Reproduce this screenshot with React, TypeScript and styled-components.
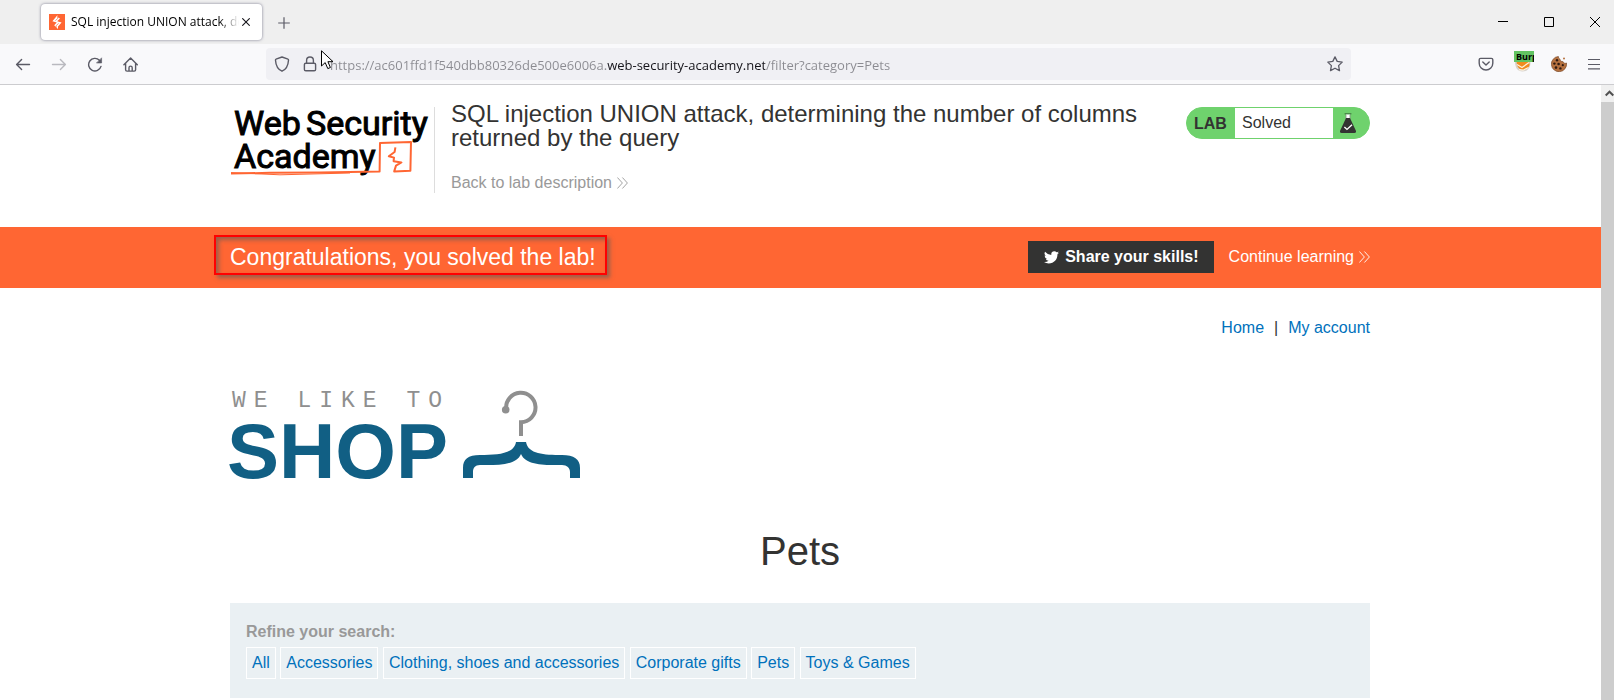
import React from "react";
import styled, { createGlobalStyle } from "styled-components";

const sans = `"Liberation Sans", Arial, sans-serif`;
const uiFont = `"Open Sans", "Noto Sans", sans-serif`;
const orange = "#ff6633";
const link = "#0071bc";
const ink = "#333332";

const GlobalStyle = createGlobalStyle`
  *, *::before, *::after { box-sizing: border-box; }
  body { margin: 0; background: #fff; font-family: ${sans}; font-size: 16px; line-height: 20px; color: ${ink}; }
  button, input { font: inherit; color: inherit; }
  h1, h2, p { margin: 0; font-weight: 400; }
  svg { display: block; flex: none; }
`;

const Browser = styled.div`
  min-height: 100vh;
  display: flex;
  flex-direction: column;
  position: relative;
  overflow: hidden;
`;

const TabBar = styled.div`
  display: flex;
  height: 44px;
  background: #efefef;
  padding-left: 41px;
`;

const Tab = styled.div`
  display: flex;
  align-items: center;
  width: 221px;
  height: 36px;
  margin-top: 4px;
  padding: 0 9px 0 8px;
  background: #fff;
  border-radius: 4px;
  box-shadow: 0 0 3px rgba(70, 70, 100, 0.7);
`;

const TabLabel = styled.span`
  flex: 1;
  min-width: 0;
  margin-left: 6px;
  overflow: hidden;
  white-space: nowrap;
  font: 12px/20px ${uiFont};
  color: #000;
  mask-image: linear-gradient(to right, #000 calc(100% - 20px), transparent);
`;

const IconButton = styled.button<{ $width?: number }>`
  display: flex;
  align-items: center;
  justify-content: center;
  flex: none;
  width: ${(p) => p.$width ?? 36}px;
  height: 32px;
  padding: 0;
  border: 0;
  background: none;
  color: #5b5b66;
`;

const NewTab = styled(IconButton)`
  margin: 7px 0 0 4px;
`;

const WindowButtons = styled.div`
  display: flex;
  align-items: center;
  margin-left: auto;
  margin-right: -4px;
  button { color: #000; }
`;

const Toolbar = styled.div`
  display: flex;
  align-items: center;
  height: 41px;
  padding-left: 5px;
  background: #f9f9fb;
  border-bottom: 1px solid #cccccf;
`;

const AddressBar = styled.label`
  flex: 1;
  min-width: 0;
  display: flex;
  align-items: center;
  height: 32px;
  margin: 0 117px;
  padding: 0 8px;
  gap: 12px;
  background: #f0f0f4;
  border-radius: 4px;
  color: #5b5b66;
`;

const Address = styled.input`
  flex: 1;
  min-width: 0;
  height: 24px;
  padding: 2px 0 0;
  border: 0;
  outline: 0;
  font: 13px/22px ${uiFont};
  color: #8b8b91;
  background: linear-gradient(to right, #8b8b91 277px, #15141a 277px, #15141a 435px, #8b8b91 435px);
  background-clip: text;
  -webkit-background-clip: text;
  -webkit-text-fill-color: transparent;
`;

const Pointer = styled.svg`
  position: absolute;
  left: 321px;
  top: 50px;
`;

const Viewport = styled.div`
  flex: 1;
  display: flex;
`;

const Page = styled.div`
  flex: 1;
  min-width: 0;
  padding: 0 1px 2px 0;
`;

const Scrollbar = styled.div`
  flex: none;
  width: 13px;
  background: #cdcdcd;
  overflow: hidden;
`;

const ScrollUp = styled(IconButton)`
  width: 17px;
  height: 17px;
  background: #f0f0f0;
`;

const Container = styled.div`
  max-width: 1140px;
  margin: 0 auto;
`;

const Header = styled(Container)`
  display: flex;
  align-items: flex-start;
  height: 142px;
  padding-top: 17px;
`;

const LogoLink = styled.a`
  width: 205px;
  height: 86px;
  margin-top: 5px;
  border-right: 1px solid #dddddd;
  svg { overflow: visible; }
`;

const AcademyText = styled.text`
  font-family: Roboto, sans-serif;
  font-size: 34px;
  fill: #000;
  stroke: #000;
  stroke-width: 1px;
`;

const Titles = styled.div`
  flex: 1;
  padding: 0 0 0 16px;
`;

const Title = styled.h1`
  font-size: 24px;
  line-height: 24px;
`;

const ArrowLink = styled.a<{ $color: string }>`
  display: inline-flex;
  align-items: center;
  gap: 5px;
  color: ${(p) => p.$color};
  text-decoration: none;
  white-space: nowrap;
`;

const BackLink = styled(ArrowLink)`
  margin-top: 23px;
`;

const LabStatus = styled.div`
  display: flex;
  width: 184px;
  height: 32px;
  margin-top: 5px;
  line-height: 30px;
  border: 1px solid #6fd26d;
  border-radius: 16px;
  background: #6fd26d;
  overflow: hidden;
  strong { width: 48px; padding-left: 7px; line-height: 32px; }
  span { width: 98px; padding-left: 7px; background: #fff; }
  svg { margin: 5px 0 0 7px; }
`;

const Banner = styled.section`
  margin-right: -1px;
  padding-right: 1px;
  background: ${orange};
  color: #fff;
`;

const BannerRow = styled(Container)`
  display: flex;
  align-items: center;
  height: 61px;
  padding-bottom: 1px;
`;

const Congrats = styled.p`
  position: relative;
  font-size: 23px;
  line-height: 32px;
  &::after {
    content: "";
    position: absolute;
    inset: -6px -11px -2px -16px;
    border: 2px solid #f00;
    box-shadow: 3px 3px 4px rgba(90, 90, 90, 0.6), inset 3px 3px 4px rgba(90, 90, 90, 0.6);
  }
`;

const ShareButton = styled.button`
  display: flex;
  align-items: center;
  gap: 6px;
  height: 32px;
  margin: 0 15px 0 auto;
  padding: 0 15px 0 16px;
  border: 0;
  background: ${ink};
  color: #fff;
  font-weight: 700;
`;

const AccountNav = styled(Container).attrs({ as: "nav" })`
  display: flex;
  justify-content: flex-end;
  gap: 10px;
  padding-top: 30px;
  a { color: ${link}; text-decoration: none; }
`;

const ShopLogo = styled(Container)`
  display: flex;
  height: 88px;
  margin-top: 53px;
  svg { overflow: visible; }
`;

const Tagline = styled.text`
  font-family: "Liberation Mono", monospace;
  font-size: 23px;
  letter-spacing: 8px;
  fill: #8f8f8f;
`;

const ShopText = styled.text`
  font-family: ${sans};
  font-size: 78px;
  font-weight: 700;
  fill: #115f84;
`;

const PageTitle = styled.h2`
  margin-top: 48px;
  font-size: 40px;
  line-height: 48px;
  text-align: center;
`;

const Filters = styled(Container).attrs({ as: "section" })`
  margin-top: 28px;
  padding: 19px 16px;
  background: #eaf0f3;
`;

const FilterLabel = styled.p`
  color: #999;
  font-weight: 700;
  line-height: 20px;
`;

const FilterList = styled.div`
  margin-top: 5px;
`;

const FilterLink = styled.a`
  display: inline-block;
  vertical-align: top;
  padding: 5px;
  border: 1px solid #fff;
  color: ${link};
  text-decoration: none;
`;

const line = { fill: "none", stroke: "currentColor", strokeWidth: 1.4, strokeLinecap: "round", strokeLinejoin: "round" } as const;

const DoubleChevron = () => (
  <svg width="11" height="12" viewBox="0 0 11 12" fill="none" stroke="currentColor" strokeWidth="0.9" aria-hidden="true">
    <path d="M0.4 0.5 5.4 6 0.4 11.5M5.4 0.5 10.4 6 5.4 11.5" />
  </svg>
);

const categories = ["All", "Accessories", "Clothing, shoes and accessories", "Corporate gifts", "Pets", "Toys & Games"];

export default function App() {
  return (
    <Browser>
      <GlobalStyle />
      <TabBar>
        <Tab>
          <svg width="16" height="16" viewBox="0 0 16 16">
            <rect width="16" height="16" fill={orange} />
            <path d="M8.6 1 3.4 7.2 7.8 8.6 5.2 11.2 9 15 9 12.6 12.6 8.6 8.2 7.2 11 4.6 8.6 3.2Z" fill="#fff" />
            <path d="M9.2 0 8.6 4.6 6.4 6.6M6.6 16 7.2 11.6 9.6 9.4" fill="none" stroke={orange} strokeWidth="0.7" />
          </svg>
          <TabLabel>SQL injection UNION attack, determining</TabLabel>
          <IconButton $width={14} aria-label="Close tab">
            <svg width="8" height="8" viewBox="0 0 8 8" stroke="#15141a" strokeWidth="1.1">
              <path d="M0.3 0.3 7.7 7.7M7.7 0.3 0.3 7.7" />
            </svg>
          </IconButton>
        </Tab>
        <NewTab aria-label="New tab">
          <svg width="12" height="12" viewBox="0 0 12 12" stroke="currentColor" strokeWidth="1.2">
            <path d="M6 0.2V11.8M0.2 6H11.8" />
          </svg>
        </NewTab>
        <WindowButtons>
          <IconButton $width={46} aria-label="Minimize">
            <svg width="10" height="10" viewBox="0 0 10 10"><path d="M0 4H10V5H0Z" /></svg>
          </IconButton>
          <IconButton $width={46} aria-label="Maximize">
            <svg width="10" height="10" viewBox="0 0 10 10" fill="none" stroke="#000"><path d="M0.5 0.5H9.5V9.5H0.5Z" /></svg>
          </IconButton>
          <IconButton $width={46} aria-label="Close">
            <svg width="10" height="10" viewBox="0 0 10 10" stroke="#000"><path d="M0 0 10 10M10 0 0 10" /></svg>
          </IconButton>
        </WindowButtons>
      </TabBar>

      <Toolbar>
        <IconButton aria-label="Back">
          <svg width="16" height="16" viewBox="0 0 16 16" {...line}><path d="M14.5 8.5H1.6M6.6 3.5 1.6 8.5 6.6 13.5" /></svg>
        </IconButton>
        <IconButton aria-label="Forward" disabled>
          <svg width="16" height="16" viewBox="0 0 16 16" {...line} opacity="0.4"><path d="M1.5 8.5H14.4M9.4 3.5 14.4 8.5 9.4 13.5" /></svg>
        </IconButton>
        <IconButton aria-label="Reload">
          <svg width="16" height="16" viewBox="0 0 16 16" {...line}>
            <path d="M14 10.4A6.3 6.3 0 1 1 12.4 4.2" />
            <path d="M14.6 2.2V7H9.8Z" fill="currentColor" strokeWidth="0.6" />
          </svg>
        </IconButton>
        <IconButton aria-label="Home">
          <svg width="16" height="16" viewBox="0 0 16 16" {...line}>
            <path d="M0.9 8.7 7.6 1.9 14.3 8.7M2.6 7.3V13.7Q2.6 15.1 4 15.1H11.2Q12.6 15.1 12.6 13.7V7.3M6 14.9V11.7Q6 10.1 7.6 10.1T9.2 11.7V14.9" />
          </svg>
        </IconButton>
        <AddressBar>
          <svg width="16" height="16" viewBox="0 0 16 16" {...line}>
            <path d="M8 1 14 3.2Q14.6 3.4 14.5 4.2C14.2 9.2 12 13.4 8 15.2 4 13.4 1.8 9.2 1.5 4.2Q1.4 3.4 2 3.2Z" />
          </svg>
          <svg width="16" height="16" viewBox="0 0 16 16" {...line}>
            <path d="M4.6 7.2V4.4a3.4 3.4 0 0 1 6.8 0V7.2M3.8 7.2H12.2Q13.6 7.2 13.6 8.6V13.4Q13.6 14.8 12.2 14.8H3.8Q2.4 14.8 2.4 13.4V8.6Q2.4 7.2 3.8 7.2Z" />
          </svg>
          <Address
            aria-label="Address"
            defaultValue="https://ac601ffd1f540dbb80326de500e6006a.web-security-academy.net/filter?category=Pets"
          />
          <svg width="16" height="16" viewBox="0 0 16 16" {...line} strokeWidth={1.3}>
            <path d="M8 0.9 10.2 5.4 15.2 6.1 11.6 9.6 12.5 14.6 8 12.2 3.5 14.6 4.4 9.6 0.8 6.1 5.8 5.4Z" />
          </svg>
        </AddressBar>
        <IconButton aria-label="Save to Pocket">
          <svg width="16" height="16" viewBox="0 0 16 16" {...line}>
            <path d="M2.6 2.4H13.4Q14.8 2.4 14.8 3.8V7.2A6.8 6.8 0 0 1 1.2 7.2V3.8Q1.2 2.4 2.6 2.4ZM4.8 6 8 9.1 11.2 6" />
          </svg>
        </IconButton>
        <IconButton $width={40} aria-label="Proxy: Burp">
          <svg width="20" height="26" viewBox="0 0 20 26">
            <path d="M1 11H16.5C16.5 17 13.6 20.5 8.5 20.5S1.4 17 1 11Z" fill="#d8d3cd" />
            <path d="M2.6 10H15L15.6 14C14 18 11.6 19.3 8.4 18.9 5 18.5 2.6 15.5 2.6 10Z" fill="#f08c1e" />
            <path d="M3 13.5 8 16.6 15 11.4M5 18.6 9 19.2 14.5 16.5" stroke="#fff3df" strokeWidth="1.2" fill="none" />
            <path d="M0 0H20V11H0Z" fill="#62c462" />
            <text x="2" y="9" fontFamily={uiFont} fontSize="9" fontWeight="700" fill="#000">Burp</text>
          </svg>
        </IconButton>
        <IconButton $width={30} aria-label="Cookies">
          <svg width="16" height="16" viewBox="0 0 16 16">
            <path d="M7.4 0.5A2.6 2.6 0 0 0 9 3.2 2.5 2.5 0 0 0 12 5.6 2.4 2.4 0 0 0 15.5 7 7.6 7.6 0 1 1 7.4 0.5Z" fill="#b5713f" stroke="#7b4a2b" strokeWidth="0.7" />
            <circle cx="13" cy="2.6" r="1" fill="#b5713f" />
            <g fill="#2f1a12">
              <circle cx="6" cy="4.2" r="1.2" /><circle cx="3.4" cy="7.6" r="1.2" /><circle cx="7.6" cy="8" r="1.3" />
              <circle cx="5" cy="11.6" r="1.3" /><circle cx="9.4" cy="12.4" r="1.2" /><circle cx="11.8" cy="9.2" r="1.1" />
            </g>
          </svg>
        </IconButton>
        <IconButton $width={40} aria-label="Menu">
          <svg width="12" height="12" viewBox="0 0 12 12" stroke="currentColor" strokeWidth="1.2">
            <path d="M0 1.5H12M0 6.5H12M0 10.8H12" />
          </svg>
        </IconButton>
      </Toolbar>

      <Viewport>
        <Page>
          <Header as="header">
            <LogoLink href="#home" aria-label="Web Security Academy">
              <svg width="200" height="70" viewBox="0 0 200 70">
                <AcademyText x="4" y="28">Web</AcademyText>
                <AcademyText x="76" y="28">Security</AcademyText>
                <AcademyText x="4" y="61">Academy</AcademyText>
                <path d="M1 66.6 40 65.8 90 65.4 149.6 64.6 150 36 181 35 180.4 63.8 164.2 64.4 166 58.6 171.4 55.4 163.6 54.2 164 50.6 158.8 49.2 164.6 45 165.4 40.4" fill="none" stroke={orange} strokeWidth="2" strokeLinejoin="round" />
                <path d="M1 65.6 50 67.8 120 66" fill="none" stroke={orange} strokeWidth="1" />
              </svg>
            </LogoLink>
            <Titles>
              <Title>SQL injection UNION attack, determining the number of columns returned by the query</Title>
              <BackLink href="#description" $color="#999">Back to lab description <DoubleChevron /></BackLink>
            </Titles>
            <LabStatus>
              <strong>LAB</strong>
              <span>Solved</span>
              <svg width="16" height="20" viewBox="0 0 16 20">
                <path d="M4.6 0H11.4V1.4H4.6Z" fill="#4a8a49" />
                <path d="M6 1.4H10V6H6Z" fill="#fff" />
                <path d="M5.6 1.4H6.4V6H5.6ZM9.6 1.4H10.4V6H9.6Z" fill="#8a8a8a" />
                <path d="M6 5H10L16 18Q16.4 20 14.4 20H1.6Q-0.4 20 0 18Z" fill={ink} />
                <path d="M4.4 14 7 16.4 12 11.8" fill="none" stroke="#fff" strokeWidth="1.4" />
              </svg>
            </LabStatus>
          </Header>

          <Banner>
            <BannerRow>
              <Congrats>Congratulations, you solved the lab!</Congrats>
              <ShareButton>
                <svg width="15" height="13" viewBox="0 0 24 20" fill="#fff">
                  <path d="M24 2.4a9.8 9.8 0 0 1-2.8.8A4.9 4.9 0 0 0 23.3.4a9.9 9.9 0 0 1-3.1 1.2 4.9 4.9 0 0 0-8.4 4.5A14 14 0 0 1 1.7.9a4.9 4.9 0 0 0 1.5 6.6 4.9 4.9 0 0 1-2.2-.6v.1a4.9 4.9 0 0 0 3.9 4.8 4.9 4.9 0 0 1-2.2.1 4.9 4.9 0 0 0 4.6 3.4A9.9 9.9 0 0 1 0 17.3a13.9 13.9 0 0 0 7.5 2.2c9.1 0 14.3-7.7 14-14.6A10 10 0 0 0 24 2.4Z" />
                </svg>
                Share your skills!
              </ShareButton>
              <ArrowLink href="#learning" $color="#fff">Continue learning <DoubleChevron /></ArrowLink>
            </BannerRow>
          </Banner>

          <AccountNav>
            <a href="#home">Home</a>
            <span>|</span>
            <a href="#account">My account</a>
          </AccountNav>

          <ShopLogo>
            <svg width="351" height="88" viewBox="0 0 351 88" role="img" aria-label="We like to shop">
              <Tagline x="2" y="16">WE LIKE TO</Tagline>
              <ShopText x="-3" y="87">SHOP</ShopText>
              <path d="M276.2 18A14.7 14.7 0 1 1 291 31.2V45" fill="none" stroke="#8f8f8f" strokeWidth="4" />
              <circle cx="275.7" cy="18.7" r="3.8" fill="#8f8f8f" />
              <path d="M233 87V77C233 68 238 64 250 64C268 64 284 63 286 51H296C298 63 314 64 332 64C344 64 350 68 350 77V87H340V81C340 77 337 74 332 74C316 74 296 75 291 63C286 75 266 74 250 74C245 74 243 77 243 81V87Z" fill="#115f84" />
            </svg>
          </ShopLogo>

          <PageTitle>Pets</PageTitle>

          <Filters>
            <FilterLabel>Refine your search:</FilterLabel>
            <FilterList>
              {categories.map((c) => (
                <React.Fragment key={c}>
                  <FilterLink href={`#${encodeURIComponent(c)}`}>{c}</FilterLink>{" "}
                </React.Fragment>
              ))}
            </FilterList>
          </Filters>
        </Page>
        <Scrollbar>
          <ScrollUp aria-label="Scroll up">
            <svg width="9" height="7" viewBox="0 0 9 7" fill="none" stroke="#505050" strokeWidth="2"><path d="M0.7 5.5 4.5 1.7 8.3 5.5" /></svg>
          </ScrollUp>
        </Scrollbar>
      </Viewport>

      <Pointer width="13" height="20" viewBox="0 0 13 20" aria-hidden="true">
        <path d="M0.5 0.8V16L4.2 12.6 6.8 18.6 9.4 17.5 6.9 11.7H12Z" fill="#fff" stroke="#000" strokeWidth="1" />
      </Pointer>
    </Browser>
  );
}
